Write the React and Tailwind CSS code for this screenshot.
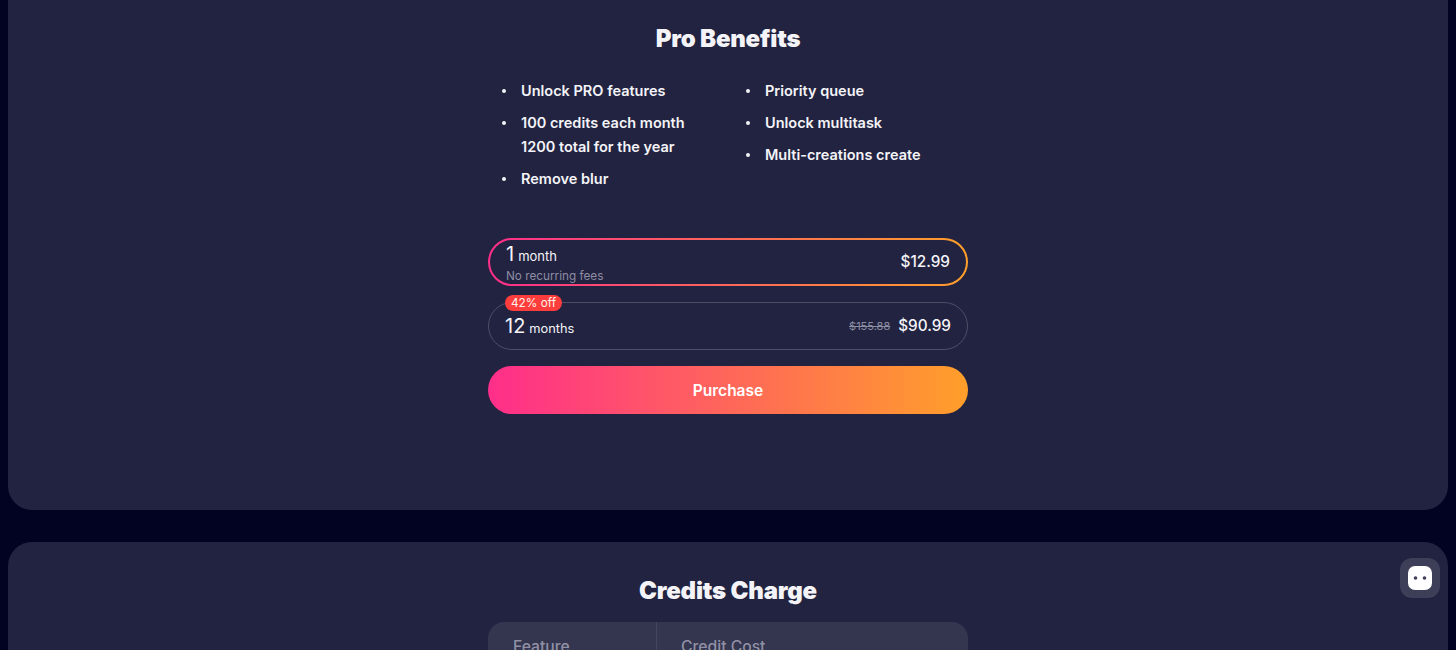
import React from "react";

const leftBenefits = [
  ["Unlock PRO features"],
  ["100 credits each month", "1200 total for the year"],
  ["Remove blur"],
];

const rightBenefits = [["Priority queue"], ["Unlock multitask"], ["Multi-creations create"]];

const BenefitList = ({ items }) => (
  <ul className="flex w-[244px] shrink-0 flex-col gap-2">
    {items.map((lines) => (
      <li key={lines[0]} className="flex text-[14.5px] font-semibold leading-6 text-[#f4f4f8]">
        <span className="flex h-6 w-[33px] shrink-0 items-center pl-[14px]">
          <span className="h-1 w-1 rounded-full bg-[#f4f4f8]" />
        </span>
        <span>
          {lines.map((line) => (
            <span key={line} className="block whitespace-nowrap">
              {line}
            </span>
          ))}
        </span>
      </li>
    ))}
  </ul>
);

const App = () => {
  return (
    <div className="relative h-[650px] overflow-hidden bg-[#020222] px-2 font-['Inter',sans-serif]">
      <section className="h-[510px] rounded-b-3xl bg-[#222340] pt-[23px]">
        <h2 className="text-center text-2xl font-black leading-8 tracking-[-0.2px] text-[#f4f4f8]">Pro Benefits</h2>
        <div className="mx-auto w-[480px]">
          <div className="mt-6 flex h-[136px]">
            <BenefitList items={leftBenefits} />
            <BenefitList items={rightBenefits} />
          </div>
          <div className="mt-[23px] rounded-3xl bg-linear-to-r/srgb from-[#ff2e8a] to-[#ff9f2a] p-0.5">
            <div className="flex h-11 items-center justify-between rounded-[22px] bg-[#222340] px-4">
              <div className="pt-0.5">
                <div className="flex items-baseline text-[20px] leading-6 text-[#f4f4f8]">
                  1<span className="ml-1 text-[13px] leading-5">month</span>
                </div>
                <div className="mt-0.5 text-[11.75px] leading-4 text-[#8d8da3]">No recurring fees</div>
              </div>
              <span className="text-[15.3px] font-medium text-[#f4f4f8]">$12.99</span>
            </div>
          </div>
          <div className="relative mt-4 flex h-12 items-center justify-between rounded-3xl border border-[#4d4e66] px-4">
            <span className="absolute left-4 top-[-8px] rounded-full bg-[#ff3d3d] px-1.5 text-[11.8px] leading-4 text-[#fff1e8]">
              42% off
            </span>
            <div className="flex items-baseline text-[20px] leading-6 text-[#f4f4f8]">
              12<span className="ml-1 text-[12.8px] leading-5">months</span>
            </div>
            <div className="flex items-center gap-2">
              <span className="text-[11px] text-[#8d8da3] line-through">$155.88</span>
              <span className="text-[15.3px] font-medium text-[#f4f4f8]">$90.99</span>
            </div>
          </div>
          <button className="mt-4 block h-12 w-full rounded-3xl bg-linear-to-r/srgb from-[#ff2e8a] to-[#ff9f2a] pt-0.5 text-[15.5px] font-semibold text-white">
            Purchase
          </button>
        </div>
      </section>
      <section className="mt-8 h-[300px] rounded-3xl bg-[#222340] pt-[33px]">
        <h2 className="text-center text-2xl font-black leading-8 tracking-[-0.2px] text-[#f4f4f8]">Credits Charge</h2>
        <div className="mx-auto mt-[15px] flex h-14 w-[480px] rounded-t-2xl bg-[#34354f] text-[15.7px] font-medium text-[#9191a5]">
          <div className="w-[169px] border-r border-[#44455f] pl-[25px] pt-[13px]">Feature</div>
          <div className="pl-6 pt-[13px]">Credit Cost</div>
        </div>
      </section>
      <button className="absolute left-[1400px] top-[558px] flex h-10 w-10 items-center justify-center rounded-xl bg-[#3d3e58]">
        <svg width="24" height="24" viewBox="0 0 24 24">
          <rect x="0" y="0" width="24" height="24" rx="7" fill="#fff" />
          <circle cx="7.5" cy="12" r="1.8" fill="#3d3e58" />
          <circle cx="16.5" cy="12" r="1.8" fill="#3d3e58" />
        </svg>
      </button>
    </div>
  );
};

export default App;
